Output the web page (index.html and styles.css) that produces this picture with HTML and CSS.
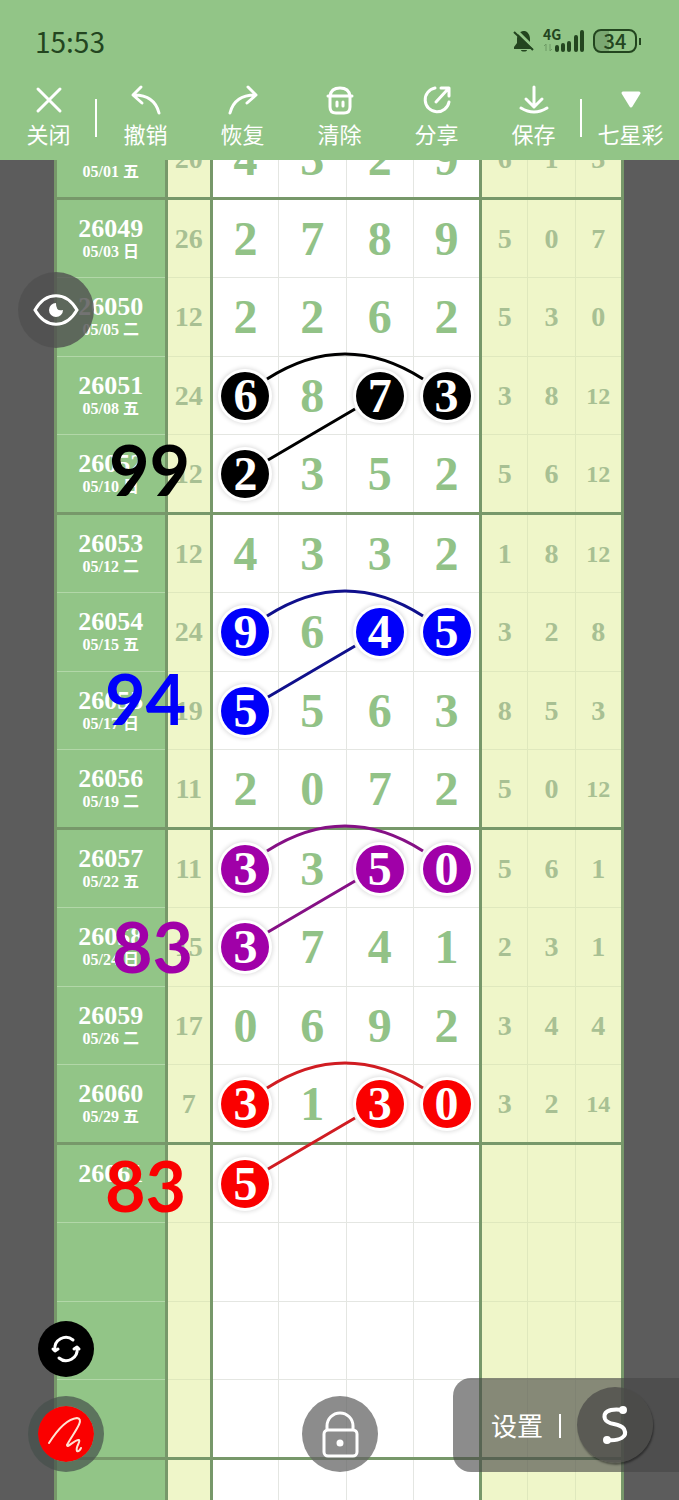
FILE: index.html
```html
<!DOCTYPE html>
<html lang="zh-CN">
<head>
    <meta charset="UTF-8">
    <meta name="viewport" content="width=device-width, initial-scale=1.0">
    <title>七星彩</title>
    <link rel="stylesheet" href="styles.css">
</head>
<body>
    <header class="header">
        <div class="status">
            <span class="clock">15:53</span>
            <div class="status-icons">
                <svg width="22" height="24" viewBox="0 0 22 24">
                    <path d="M10 2c-4 1-6 4-6 8v4l-3 4v2h19v-2l-3-4v-4c0-4-2-7-5-8zM8 21h6c0 2-6 2-6 0z" fill="#23451f"/>
                    <path d="M3 1l18 18" stroke="#92c587" stroke-width="3"/>
                    <path d="M1 3l19 18" stroke="#23451f" stroke-width="2"/>
                </svg>
                <svg width="42" height="26" viewBox="0 0 42 26">
                    <text x="0" y="12" class="net">4G</text>
                    <path d="M3 23v-7l-2 2M7 16v7l2-2" fill="none" stroke="#6d9a64" stroke-width="1"/>
                    <path d="M14 22v-3M20 22v-5M26 22v-7M33 22V9M39 22V4" stroke="#23451f" stroke-width="4" stroke-linecap="round"/>
                </svg>
                <span class="battery">34</span>
            </div>
        </div>
        <nav class="toolbar">
            <button class="tool split">
                <svg viewBox="0 0 32 32"><path d="M5 5l22 22M27 5L5 27"/></svg>
                关闭
            </button>
            <button class="tool">
                <svg viewBox="0 0 32 32"><path d="M11 3L3 11l9 8M4 11c13 0 22 6 25 18"/></svg>
                撤销
            </button>
            <button class="tool">
                <svg viewBox="0 0 32 32"><path d="M21 3l8 8-9 8M28 11C15 11 6 17 3 29"/></svg>
                恢复
            </button>
            <button class="tool">
                <svg viewBox="0 0 32 32"><path d="M4 12h24M6 12v11q0 6 6 6h8q6 0 6-6V12M6 12q1-8 10-8t10 8M13 18v4M19 18v4"/></svg>
                清除
            </button>
            <button class="tool">
                <svg viewBox="0 0 32 32"><path d="M14 4A12 12 0 1 0 28 18M15 18L27 5M20 4h8v8"/></svg>
                分享
            </button>
            <button class="tool split">
                <svg viewBox="0 0 32 32"><path d="M16 3v19M8 15l8 8 8-8M3 24q13 8 26 0"/></svg>
                保存
            </button>
            <button class="tool">
                <svg viewBox="0 0 32 32"><path d="M8 9h16l-8 13z" fill="#fff"/></svg>
                七星彩
            </button>
        </nav>
    </header>

    <main class="board">
        <div class="sheet">
            <table class="chart">
                <colgroup>
                    <col class="c-issue"><col class="c-sum">
                    <col class="c-main"><col class="c-main"><col class="c-main"><col class="c-main">
                    <col class="c-tail"><col class="c-tail"><col class="c-tail">
                </colgroup>
                <tbody id="rows"></tbody>
            </table>
            <svg class="links" id="links" viewBox="0 0 570 1418" preserveAspectRatio="none"></svg>
            <span class="note note-1">99</span>
            <span class="note note-2">94</span>
            <span class="note note-3">83</span>
            <span class="note note-4">83</span>
        </div>
    </main>

    <button class="float eye" aria-label="显示">
        <svg width="48" height="36" viewBox="0 0 48 36">
            <path d="M3 18C14-1 34-1 45 18C34 37 14 37 3 18z" fill="none" stroke="#fff" stroke-width="3"/>
            <path d="M24 11a7 7 0 1 0 7 7q-7 2-7-7z" fill="#fff"/>
        </svg>
    </button>
    <button class="float swap" aria-label="切换">
        <svg width="32" height="28" viewBox="0 0 32 28" fill="none" stroke="#fff" stroke-width="3" stroke-linecap="round" stroke-linejoin="round">
            <path d="M23 5A11 11 0 0 0 5 15M9 23A11 11 0 0 0 27 13"/>
            <path d="M3 14l2 2 3-2M24 14l3-2 2 2"/>
        </svg>
    </button>
    <button class="float pen" aria-label="画笔">
        <svg width="56" height="56" viewBox="0 0 56 56" fill="none" stroke="#ffe3d2" stroke-width="2" stroke-linecap="round" stroke-linejoin="round">
            <path d="M11 37C18 26 28 13 39 12c9 1-5 17-10 27c0 4 8-6 12-5c2 2-4 7-2 11q2 1 4-3"/>
        </svg>
    </button>
    <button class="float lock" aria-label="锁定">
        <svg width="40" height="50" viewBox="0 0 40 50" fill="none" stroke="#fff" stroke-width="3">
            <path d="M7 21v-4a13 13 0 0 1 26 0v4"/>
            <rect x="4" y="21" width="33" height="26" rx="4"/>
            <circle cx="20" cy="34" r="2" fill="#fff"/>
        </svg>
    </button>
    <div class="settings">
        <button class="settings-text">设置</button>
        <button class="curve" aria-label="曲线">
            <svg width="32" height="42" viewBox="0 0 32 42" fill="none" stroke="#fff" stroke-width="4">
                <path d="M24 6C8 4 4 9 6 15C9 22 20 18 25 25C29 33 21 37 8 36"/>
                <circle cx="24" cy="6" r="2" fill="#fff"/>
                <circle cx="8" cy="36" r="2" fill="#fff"/>
            </svg>
        </button>
    </div>

    <script>
        // issue, date, sum, four main digits, three tail digits
        const draws = [
            ['26048', '05/01 五', 20, 4, 3, 2, 9, 6, 1, 3],
            ['26049', '05/03 日', 26, 2, 7, 8, 9, 5, 0, 7],
            ['26050', '05/05 二', 12, 2, 2, 6, 2, 5, 3, 0],
            ['26051', '05/08 五', 24, 6, 8, 7, 3, 3, 8, 12],
            ['26052', '05/10 日', 12, 2, 3, 5, 2, 5, 6, 12],
            ['26053', '05/12 二', 12, 4, 3, 3, 2, 1, 8, 12],
            ['26054', '05/15 五', 24, 9, 6, 4, 5, 3, 2, 8],
            ['26055', '05/17 日', 19, 5, 5, 6, 3, 8, 5, 3],
            ['26056', '05/19 二', 11, 2, 0, 7, 2, 5, 0, 12],
            ['26057', '05/22 五', 11, 3, 3, 5, 0, 5, 6, 1],
            ['26058', '05/24 日', 15, 3, 7, 4, 1, 2, 3, 1],
            ['26059', '05/26 二', 17, 0, 6, 9, 2, 3, 4, 4],
            ['26060', '05/29 五', 7, 3, 1, 3, 0, 3, 2, 14],
            ['26061', '', '', 5, '', '', '', '', '', ''],
            [], [], [], []
        ];

        // each mark covers three digits of one row and the first digit of the next
        const marks = [
            { row: 3, color: 'black', y: 276 },
            { row: 6, color: 'blue', y: 513 },
            { row: 9, color: 'purple', y: 748 },
            { row: 12, color: 'red', y: 985 }
        ];

        function markFor(row, col) {
            return marks.find(m => (m.row === row && [0, 2, 3].includes(col)) || (m.row + 1 === row && col === 0));
        }

        let html = '';
        draws.forEach((d, r) => {
            html += `<tr><th scope="row" class="issue"><span class="no">${d[0] || ''}</span><span class="date">${d[1] || ''}</span></th>`;
            html += `<td class="sum">${d[2] ?? ''}</td>`;
            for (let c = 0; c < 4; c++) {
                const mark = markFor(r, c);
                const n = d[3 + c] ?? '';
                html += `<td class="main">${mark ? `<span class="ball ${mark.color}">${n}</span>` : n}</td>`;
            }
            for (let c = 0; c < 3; c++) {
                const n = d[7 + c] ?? '';
                html += `<td class="tail${n > 9 ? ' small' : ''}">${n}</td>`;
            }
            html += '</tr>';
        });
        document.getElementById('rows').innerHTML = html;

        document.getElementById('links').innerHTML = marks.map(m =>
            `<path class="line-${m.color}" d="M213 ${m.y - 15}Q291 ${m.y - 65} 369 ${m.y - 15}M214 ${m.y + 66}L301 ${m.y + 15}"/>`
        ).join('');
    </script>
</body>
</html>
```
FILE: styles.css
```css
* {
    box-sizing: border-box;
}
body {
    margin: 0;
    height: 100vh;
    display: flex;
    flex-direction: column;
    position: relative;
    overflow: hidden;
    background: #5c5c5c;
    font-family: "Noto Sans", "Noto Sans CJK SC", sans-serif;
}
button {
    border: none;
    background: none;
    padding: 0;
    color: #fff;
    font-family: inherit;
    cursor: pointer;
}
svg {
    display: block;
    overflow: visible;
}

/* header */
.header {
    position: relative;
    z-index: 1;
    background: #92c587;
    height: 160px;
    flex: none;
}
.status {
    height: 82px;
    padding: 0 42px 0 35px;
    display: flex;
    align-items: center;
    justify-content: space-between;
    color: #23451f;
}
.clock {
    font-family: "Noto Sans CJK SC", sans-serif;
    font-size: 28px;
}
.status-icons {
    display: flex;
    align-items: center;
    gap: 8px;
}
.net {
    font: bold 14px "Noto Sans CJK SC", sans-serif;
    fill: #23451f;
}
.battery {
    position: relative;
    width: 44px;
    height: 24px;
    border: 2px solid #23451f;
    border-radius: 8px;
    background: linear-gradient(to right, #7ba872 34%, transparent 34%);
    font: 500 20px/20px "Noto Sans CJK SC", sans-serif;
    text-align: center;
}
.battery::after {
    content: "";
    position: absolute;
    right: -6px;
    top: 7px;
    width: 2px;
    height: 7px;
    background: #23451f;
}
.toolbar {
    display: grid;
    grid-template-columns: repeat(7, 1fr);
}
.tool {
    position: relative;
    display: flex;
    flex-direction: column;
    align-items: center;
    padding-top: 2px;
    font-size: 22px;
    line-height: 36px;
    white-space: nowrap;
}
.tool svg {
    width: 32px;
    height: 32px;
    fill: none;
    stroke: #fff;
    stroke-width: 3;
    stroke-linecap: round;
    stroke-linejoin: round;
}
.split::after {
    content: "";
    position: absolute;
    right: 0;
    top: 17px;
    width: 2px;
    height: 38px;
    background: #fff;
}

/* chart */
.board {
    flex: 1;
    min-height: 0;
    overflow: hidden;
}
.sheet {
    position: relative;
    margin: -42px 55px 0 54px;
}
.chart {
    width: 100%;
    table-layout: fixed;
    border-collapse: collapse;
    border: 3px solid #77986a;
    font-family: "Liberation Serif", "Noto Sans CJK SC", serif;
    font-weight: bold;
    text-align: center;
}
.c-issue {
    width: 110px;
}
.c-sum {
    width: 45px;
}
.c-main {
    width: 67px;
}
.c-tail {
    width: 47px;
}
.chart tr {
    height: 79px;
}
.chart tr:nth-child(4n) {
    height: 78px;
}
.chart th,
.chart td {
    padding: 0;
    line-height: 48px;
    border-top: 1px solid #e4e6e2;
}
.chart tr:nth-child(4n + 2) th,
.chart tr:nth-child(4n + 2) td {
    border-top: 3px solid #77986a;
}
.chart .issue {
    background: #92c587;
    color: #fff;
    border-color: #b2d7a8;
    border-right: 3px solid #77986a;
}
.chart .sum,
.chart .tail {
    background: #eff6c9;
    color: #a8c093;
    font-size: 28px;
    border-color: #dfe8bd;
}
.chart .sum {
    border-right: 3px solid #77986a;
}
.chart .main {
    background: #fff;
    color: #92c287;
    font-size: 48px;
    border-left: 1px solid #e4e6e2;
}
.chart .tail {
    border-left: 1px solid #dfe8bd;
}
.chart .main + .tail,
.chart .sum + .main {
    border-left: 3px solid #77986a;
}
.chart .small {
    font-size: 24px;
}
.no,
.date {
    display: block;
}
.no {
    height: 26px;
    font-size: 26px;
    line-height: 26px;
}
.date {
    height: 20px;
    font-size: 16px;
    line-height: 20px;
}
.ball {
    display: block;
    width: 48px;
    height: 48px;
    margin: 0 auto;
    border-radius: 50%;
    color: #fff;
    box-shadow: 0 0 0 3px #fff, 0 0 4px 4px #ddd;
}
.black {
    background: #000;
}
.blue {
    background: #0000fa;
}
.purple {
    background: #a000a8;
}
.red {
    background: #fa0000;
}
.links {
    position: absolute;
    left: 0;
    top: 0;
    width: 100%;
    height: 1418px;
    fill: none;
    stroke-width: 3;
}
.line-black {
    stroke: #000;
}
.line-blue {
    stroke: #10108c;
}
.line-purple {
    stroke: #851085;
}
.line-red {
    stroke: #d01c22;
}

/* handwritten results beside the chart */
.note {
    position: absolute;
    font: bold 70px/72px Lato, sans-serif;
}
.note-1 {
    left: 55px;
    top: 315px;
    color: #000;
}
.note-2 {
    left: 51px;
    top: 544px;
    color: #0000fa;
}
.note-3 {
    left: 58px;
    top: 792px;
    color: #a000a8;
}
.note-4 {
    left: 51px;
    top: 1031px;
    color: #fa0000;
}

/* floating buttons */
.float {
    position: absolute;
    z-index: 2;
    width: 76px;
    height: 76px;
    border-radius: 50%;
    display: flex;
    align-items: center;
    justify-content: center;
}
.eye {
    left: 18px;
    top: 272px;
    background: rgba(80, 80, 80, 0.8);
}
.swap {
    left: 38px;
    bottom: 123px;
    width: 56px;
    height: 56px;
    background: #000;
}
.pen {
    left: 28px;
    bottom: 28px;
    background: #fa0000;
    background-clip: padding-box;
    border: 10px solid rgba(70, 80, 75, 0.7);
}
.lock {
    left: 50%;
    bottom: 28px;
    margin-left: -38px;
    background: rgba(100, 100, 100, 0.74);
}
.settings {
    position: absolute;
    z-index: 2;
    right: 0;
    bottom: 28px;
    width: 226px;
    height: 94px;
    padding: 0 26px 0 38px;
    border-radius: 18px 0 0 18px;
    background: rgba(70, 70, 70, 0.62);
    display: flex;
    align-items: center;
    justify-content: space-between;
}
.settings-text {
    position: relative;
    font-size: 26px;
}
.settings-text::after {
    content: "";
    position: absolute;
    right: -18px;
    top: 8px;
    width: 2px;
    height: 24px;
    background: #fff;
}
.curve {
    width: 76px;
    height: 76px;
    border-radius: 50%;
    background: rgba(75, 75, 72, 0.75);
    box-shadow: 1px 2px 2px rgba(0, 0, 0, 0.4);
    display: flex;
    align-items: center;
    justify-content: center;
}
```
